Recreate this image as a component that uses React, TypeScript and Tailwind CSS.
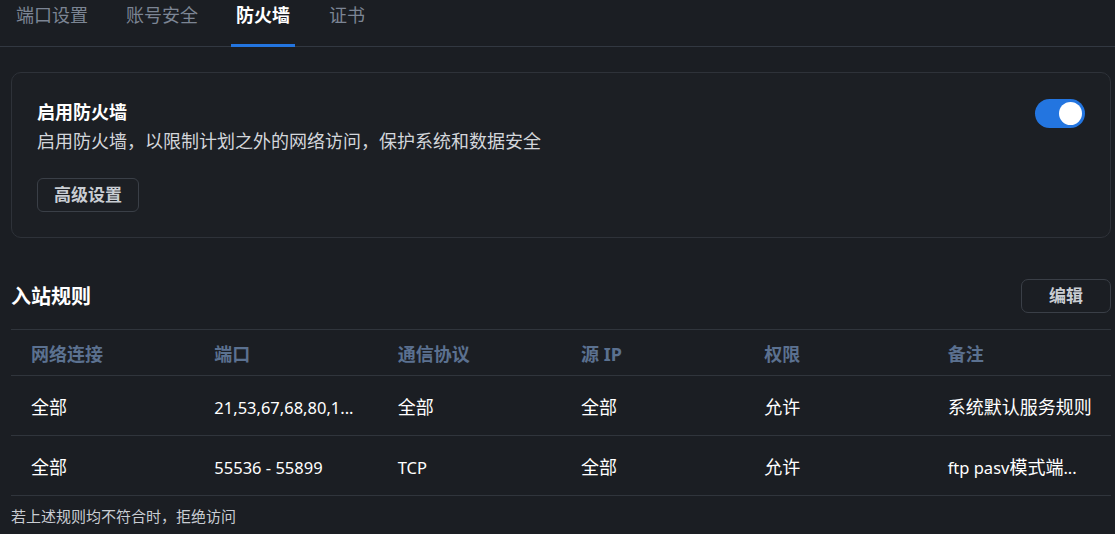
import React, { useState } from 'react';

const FONT = '"Segoe UI", "Noto Sans", "Noto Sans CJK SC", sans-serif';

const TABS = [
    { label: '端口设置', cls: 'ml-[16px]' },
    { label: '账号安全', cls: 'ml-[38px]' },
    { label: '防火墙', cls: 'ml-[33px]' },
    { label: '证书', cls: 'ml-[34px]' },
];

const COLUMNS = ['网络连接', '端口', '通信协议', '源 IP', '权限', '备注'];

const RULES = [
    ['全部', '21,53,67,68,80,1...', '全部', '全部', '允许', '系统默认服务规则'],
    ['全部', '55536 - 55899', 'TCP', '全部', '允许', 'ftp pasv模式端...'],
];

// latin runs render a bit narrower than the CJK glyphs in the original
const Cell: React.FC<{ text: string }> = ({ text }) => (
    <>
        {text.split(/([\x20-\x7e]+)/).filter(Boolean).map((part, k) =>
            /^[\x20-\x7e]+$/.test(part) ? (
                <span key={k} className="text-[16.5px]">{part}</span>
            ) : (
                <span key={k}>{part}</span>
            )
        )}
    </>
);

const App: React.FC = () => {
    const [enabled, setEnabled] = useState(true);

    return (
        <div className="w-[1115px] h-[534px] bg-[#1b1e23] text-[#e6e8eb] overflow-hidden" style={{ fontFamily: FONT }}>
            {/* --- TABS --- */}
            <div className="flex h-[47px] border-b border-[#323841]">
                {TABS.map((tab) => (
                    <div
                        key={tab.label}
                        className={`relative h-full flex items-start pt-[2px] text-[18px] leading-[26px] ${tab.cls} ${tab.label === '防火墙' ? 'font-bold text-white px-[5px]' : 'text-[#7c8594]'}`}
                    >
                        {tab.label}
                        {tab.label === '防火墙' && <span className="absolute left-0 right-0 bottom-[-1px] h-[3px] bg-[#2375e0]" />}
                    </div>
                ))}
            </div>

            {/* --- FIREWALL CARD --- */}
            <div className="ml-[11px] w-[1100px] mt-[25px] h-[166px] border border-[#2e3239] rounded-[10px] bg-[#1c1f24] pl-[25px] pr-[25px] pt-[26px] flex justify-between">
                <div>
                    <div className="text-[18px] leading-[26px] font-bold text-white">启用防火墙</div>
                    <div className="text-[18px] leading-[26px] mt-[3px] text-[#d3d6db]">启用防火墙，以限制计划之外的网络访问，保护系统和数据安全</div>
                    <button className="mt-[24px] h-[34px] w-[102px] border border-[#3a3f47] rounded-[6px] text-[17px] font-bold text-[#c9cdd3]">
                        高级设置
                    </button>
                </div>
                <button
                    onClick={() => setEnabled(!enabled)}
                    className={`w-[50px] h-[29px] rounded-full flex items-center px-[3px] ${enabled ? 'bg-[#2375e0] justify-end' : 'bg-[#3a3f47] justify-start'}`}
                >
                    <span className="w-[23px] h-[23px] rounded-full bg-white" />
                </button>
            </div>

            {/* --- INBOUND RULES --- */}
            <div className="ml-[11px] w-[1100px] mt-[41px]">
                <div className="flex justify-between items-center h-[34px]">
                    <div className="text-[20px] font-bold text-white pt-[2px]">入站规则</div>
                    <button className="h-[34px] w-[90px] border border-[#3a3f47] rounded-[7px] text-[17px] font-bold text-[#c9cdd3]">
                        编辑
                    </button>
                </div>
                <div className="mt-[16px] border-t border-[#30353c]">
                    <div className="grid grid-cols-6 h-[46px] items-center pt-[3px] border-b border-[#30353c]">
                        {COLUMNS.map((c) => (
                            <div key={c} className="pl-[20px] text-[18px] font-bold text-[#5b7190]">{c}</div>
                        ))}
                    </div>
                    {RULES.map((row, i) => (
                        <div key={i} className="grid grid-cols-6 h-[60px] items-center pt-[3px] border-b border-[#30353c]">
                            {row.map((cell, j) => (
                                <div key={j} className="pl-[20px] text-[18px] text-white whitespace-nowrap">
                                    <Cell text={cell} />
                                </div>
                            ))}
                        </div>
                    ))}
                </div>
                <div className="mt-[9px] text-[15px] leading-[22px] text-[#c9cdd3]">若上述规则均不符合时，拒绝访问</div>
            </div>
        </div>
    );
};

export default App;
